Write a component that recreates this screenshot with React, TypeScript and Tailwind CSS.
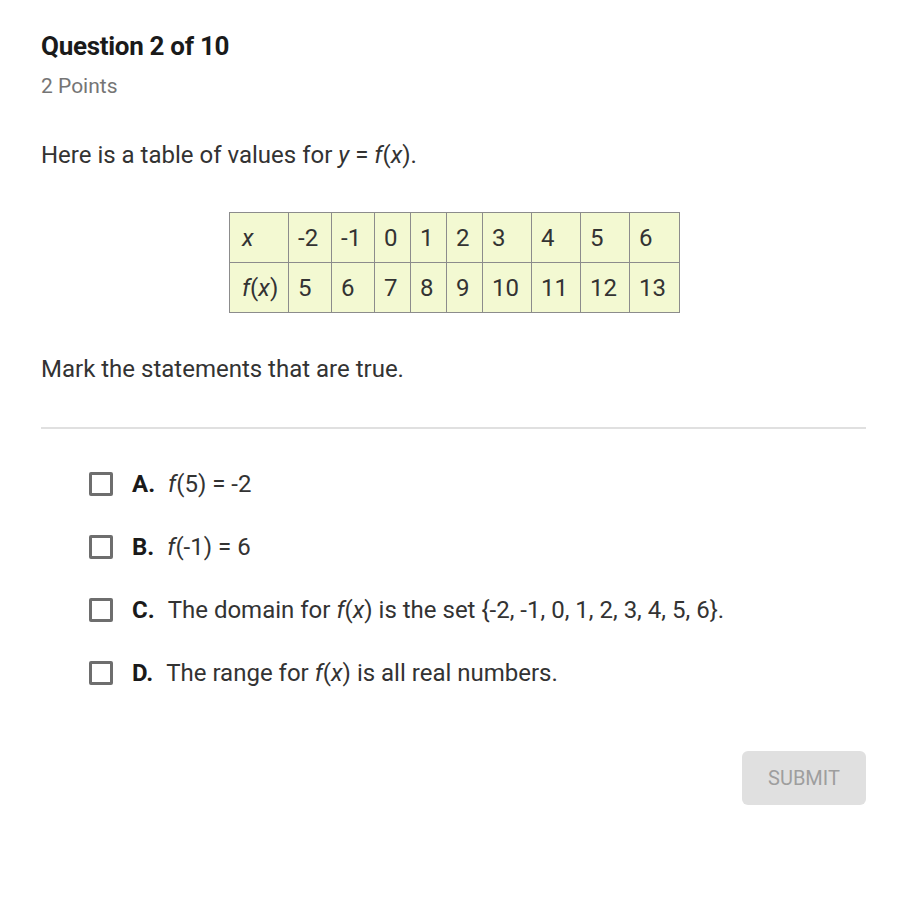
import { useState } from "react";

const xs = ["-2", "-1", "0", "1", "2", "3", "4", "5", "6"];
const fx = ["5", "6", "7", "8", "9", "10", "11", "12", "13"];
const widths = ["w-[59px]", "w-[43px]", "w-[43px]", "w-[36px]", "w-[36px]", "w-[36px]", "w-[49px]", "w-[49px]", "w-[49px]", "w-[50px]"];

const F = () => <i>f</i>;
const X = () => <i>x</i>;

const options = [
    { key: "A", body: <><F />(5) = -2</> },
    { key: "B", body: <><F />(-1) = 6</> },
    { key: "C", body: <>The domain for <F />(<X />) is the set {"{"}-2, -1, 0, 1, 2, 3, 4, 5, 6{"}"}.</> },
    { key: "D", body: <>The range for <F />(<X />) is all real numbers.</> },
];

const App = () => {
    const [checked, setChecked] = useState<string[]>([]);

    const toggle = (k: string) =>
        setChecked((prev) => (prev.includes(k) ? prev.filter((p) => p !== k) : [...prev, k]));

    return (
        <div className="min-h-[924px] bg-white pl-[41px] pr-[46px] pt-[31px] text-[#333] font-['Roboto',sans-serif]">
            {/*Heading*/}
            <h1 className="text-[26px] font-bold leading-[30px] tracking-[-0.3px] text-[#1a1a1a]">Question 2 of 10</h1>
            <p className="mt-[15px] text-[21px] leading-[20px] text-[#757575]">2 Points</p>

            {/*Prompt*/}
            <p className="mt-[45px] text-[24px] leading-[28px]">
                Here is a table of values for <i>y</i> = <F />(<X />).
            </p>

            {/*Table*/}
            <div className="mt-[43px] flex justify-center pl-[2px]">
                <table className="table-fixed border-collapse bg-[#f3f9d2] text-[24px] leading-[28px]">
                    <tbody>
                        <tr className="h-[50px]">
                            <td className={`${widths[0]} border border-[#8c8c8c] pl-[12px]`}><X /></td>
                            {xs.map((v, i) => (
                                <td key={v} className={`${widths[i + 1]} border border-[#8c8c8c] pl-[9px]`}>{v}</td>
                            ))}
                        </tr>
                        <tr className="h-[50px]">
                            <td className={`${widths[0]} border border-[#8c8c8c] pl-[12px]`}><F />(<X />)</td>
                            {fx.map((v, i) => (
                                <td key={v} className={`${widths[i + 1]} border border-[#8c8c8c] pl-[9px]`}>{v}</td>
                            ))}
                        </tr>
                    </tbody>
                </table>
            </div>

            <p className="mt-[42px] text-[24px] leading-[28px]">Mark the statements that are true.</p>

            <div className="mt-[44px] h-[2px] bg-[#e0e0e0]" />

            {/*Options*/}
            <div className="mt-[41px] flex flex-col gap-[35px] pl-[48px]">
                {options.map((o) => (
                    <label key={o.key} className="flex h-[28px] cursor-pointer items-center text-[24px]">
                        <input
                            type="checkbox"
                            checked={checked.includes(o.key)}
                            onChange={() => toggle(o.key)}
                            className="sr-only"
                        />
                        <span className="mr-[19px] h-[24px] w-[24px] shrink-0 rounded-[2px] border-[3px] border-[#6e6e6e]" />
                        <span className="mr-[13px] font-bold text-[#1a1a1a]">{o.key}.</span>
                        <span>{o.body}</span>
                    </label>
                ))}
            </div>

            {/*Submit*/}
            <div className="mt-[64px] flex justify-end">
                <button className="h-[54px] w-[124px] rounded-[6px] bg-[#e0e0e0] text-[20px] text-[#9e9e9e]">
                    SUBMIT
                </button>
            </div>
        </div>
    );
};

export default App;
